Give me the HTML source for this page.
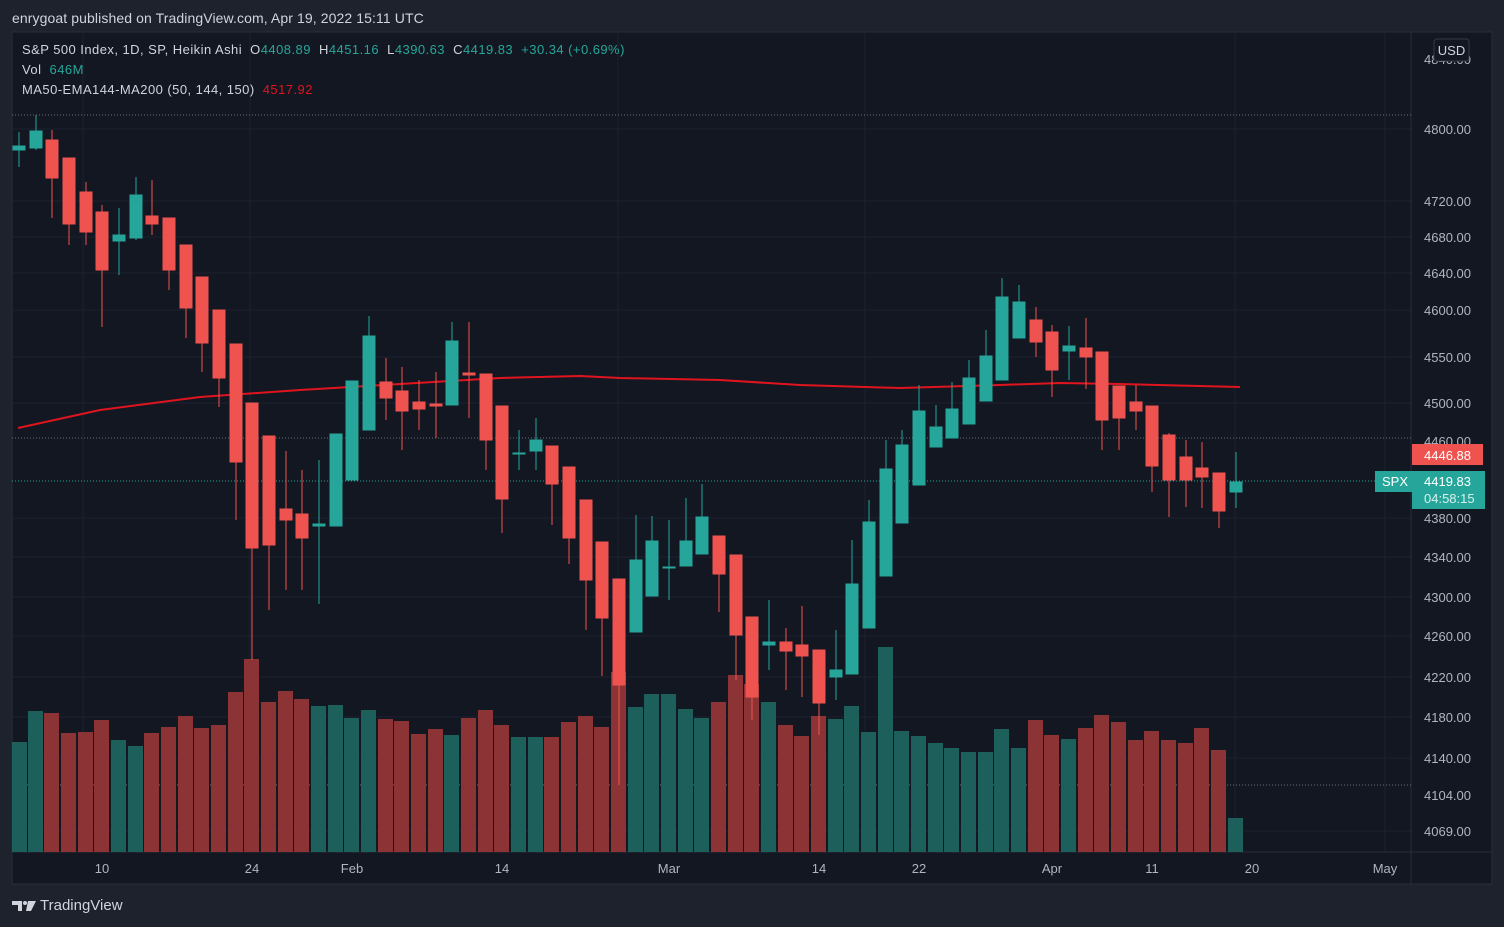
<!DOCTYPE html>
<html><head><meta charset="utf-8"><style>
html,body{margin:0;padding:0;width:1504px;height:927px;background:#1e222d;overflow:hidden;font-family:"Liberation Sans",sans-serif}
.t{position:absolute;white-space:nowrap}
.lg{letter-spacing:0.45px}
</style></head><body>
<div class="t" style="left:12px;top:10px;font-size:14px;color:#d1d4dc;letter-spacing:0.1px">enrygoat published on TradingView.com, Apr 19, 2022 15:11 UTC</div>
<svg width="1504" height="927" style="position:absolute;left:0;top:0">
<rect x="12" y="32" width="1480" height="852" fill="#131722" stroke="#2a2e39"/>
<g stroke="#1c2030" stroke-width="1">
<line x1="12" x2="1411" y1="129" y2="129"/><line x1="12" x2="1411" y1="201" y2="201"/><line x1="12" x2="1411" y1="237" y2="237"/><line x1="12" x2="1411" y1="273" y2="273"/><line x1="12" x2="1411" y1="310" y2="310"/><line x1="12" x2="1411" y1="357" y2="357"/><line x1="12" x2="1411" y1="403" y2="403"/><line x1="12" x2="1411" y1="518" y2="518"/><line x1="12" x2="1411" y1="557" y2="557"/><line x1="12" x2="1411" y1="597" y2="597"/><line x1="12" x2="1411" y1="636" y2="636"/><line x1="12" x2="1411" y1="677" y2="677"/><line x1="12" x2="1411" y1="717" y2="717"/><line x1="12" x2="1411" y1="758" y2="758"/><line x1="12" x2="1411" y1="831" y2="831"/>
<line x1="83" x2="83" y1="32" y2="852"/><line x1="250" x2="250" y1="32" y2="852"/><line x1="618" x2="618" y1="32" y2="852"/><line x1="865" x2="865" y1="32" y2="852"/><line x1="1235" x2="1235" y1="32" y2="852"/><line x1="1385" x2="1385" y1="32" y2="852"/>
</g>
<line x1="1411" x2="1411" y1="32" y2="884" stroke="#2a2e39"/>
<line x1="12" x2="1492" y1="852" y2="852" stroke="#2a2e39"/>
<g stroke="#6a6d78" stroke-dasharray="1 2"><line x1="12" x2="1411" y1="115" y2="115"/><line x1="12" x2="1411" y1="785" y2="785"/><line x1="12" x2="1411" y1="438" y2="438"/></g>
<line x1="12" x2="1375" y1="481" y2="481" stroke="#26a69a" stroke-dasharray="1 2"/>
<g fill="#1d5f5a">
<rect x="12" y="742" width="15" height="110"/><rect x="28" y="711" width="15" height="141"/><rect x="111" y="740" width="15" height="112"/><rect x="128" y="746" width="15" height="106"/><rect x="311" y="706" width="15" height="146"/><rect x="328" y="705" width="15" height="147"/><rect x="344" y="718" width="15" height="134"/><rect x="361" y="710" width="15" height="142"/><rect x="444" y="735" width="15" height="117"/><rect x="511" y="737" width="15" height="115"/><rect x="528" y="737" width="15" height="115"/><rect x="628" y="707" width="15" height="145"/><rect x="644" y="694" width="15" height="158"/><rect x="661" y="694" width="15" height="158"/><rect x="678" y="709" width="15" height="143"/><rect x="694" y="718" width="15" height="134"/><rect x="761" y="702" width="15" height="150"/><rect x="828" y="719" width="15" height="133"/><rect x="844" y="706" width="15" height="146"/><rect x="861" y="732" width="15" height="120"/><rect x="878" y="647" width="15" height="205"/><rect x="894" y="731" width="15" height="121"/><rect x="911" y="736" width="15" height="116"/><rect x="928" y="743" width="15" height="109"/><rect x="944" y="748" width="15" height="104"/><rect x="961" y="752" width="15" height="100"/><rect x="978" y="752" width="15" height="100"/><rect x="994" y="729" width="15" height="123"/><rect x="1011" y="748" width="15" height="104"/><rect x="1061" y="739" width="15" height="113"/><rect x="1228" y="818" width="15" height="34"/>
</g>
<g fill="#8c3336">
<rect x="44" y="713" width="15" height="139"/><rect x="61" y="733" width="15" height="119"/><rect x="78" y="732" width="15" height="120"/><rect x="94" y="720" width="15" height="132"/><rect x="144" y="733" width="15" height="119"/><rect x="161" y="727" width="15" height="125"/><rect x="178" y="716" width="15" height="136"/><rect x="194" y="728" width="15" height="124"/><rect x="211" y="725" width="15" height="127"/><rect x="228" y="692" width="15" height="160"/><rect x="244" y="659" width="15" height="193"/><rect x="261" y="702" width="15" height="150"/><rect x="278" y="691" width="15" height="161"/><rect x="294" y="699" width="15" height="153"/><rect x="378" y="719" width="15" height="133"/><rect x="394" y="721" width="15" height="131"/><rect x="411" y="734" width="15" height="118"/><rect x="428" y="729" width="15" height="123"/><rect x="461" y="718" width="15" height="134"/><rect x="478" y="710" width="15" height="142"/><rect x="494" y="725" width="15" height="127"/><rect x="544" y="737" width="15" height="115"/><rect x="561" y="722" width="15" height="130"/><rect x="578" y="716" width="15" height="136"/><rect x="594" y="727" width="15" height="125"/><rect x="611" y="672" width="15" height="180"/><rect x="711" y="702" width="15" height="150"/><rect x="728" y="675" width="15" height="177"/><rect x="744" y="684" width="15" height="168"/><rect x="778" y="725" width="15" height="127"/><rect x="794" y="736" width="15" height="116"/><rect x="811" y="716" width="15" height="136"/><rect x="1028" y="720" width="15" height="132"/><rect x="1044" y="735" width="15" height="117"/><rect x="1078" y="728" width="15" height="124"/><rect x="1094" y="715" width="15" height="137"/><rect x="1111" y="722" width="15" height="130"/><rect x="1128" y="740" width="15" height="112"/><rect x="1144" y="731" width="15" height="121"/><rect x="1161" y="740" width="15" height="112"/><rect x="1178" y="743" width="15" height="109"/><rect x="1194" y="728" width="15" height="124"/><rect x="1211" y="750" width="15" height="102"/>
</g>
<polyline fill="none" stroke="#e0141e" stroke-width="2" points="18,428 100,410 200,397 300,390 400,384 500,378 580,376 620,378 720,380 800,385 900,388 1000,385 1060,383 1120,384 1240,387"/>
<g stroke="#26a69a" fill="#26a69a">
<line x1="19" x2="19" y1="132" y2="167"/><rect x="13" y="146" width="12" height="4"/>
<line x1="36" x2="36" y1="115" y2="150"/><rect x="30" y="131" width="12" height="17"/>
<line x1="119" x2="119" y1="208" y2="275"/><rect x="113" y="235" width="12" height="6"/>
<line x1="136" x2="136" y1="177" y2="240"/><rect x="130" y="195" width="12" height="43"/>
<line x1="319" x2="319" y1="460" y2="604"/><rect x="313" y="524" width="12" height="2"/>
<line x1="336" x2="336" y1="434" y2="526"/><rect x="330" y="434" width="12" height="92"/>
<line x1="352" x2="352" y1="381" y2="480"/><rect x="346" y="381" width="12" height="99"/>
<line x1="369" x2="369" y1="316" y2="430"/><rect x="363" y="336" width="12" height="94"/>
<line x1="452" x2="452" y1="322" y2="405"/><rect x="446" y="341" width="12" height="64"/>
<line x1="519" x2="519" y1="430" y2="470"/><rect x="513" y="453" width="12" height="1"/>
<line x1="536" x2="536" y1="418" y2="470"/><rect x="530" y="440" width="12" height="11"/>
<line x1="636" x2="636" y1="515" y2="632"/><rect x="630" y="560" width="12" height="72"/>
<line x1="652" x2="652" y1="516" y2="596"/><rect x="646" y="541" width="12" height="55"/>
<line x1="669" x2="669" y1="520" y2="600"/><rect x="663" y="567" width="12" height="1"/>
<line x1="686" x2="686" y1="498" y2="566"/><rect x="680" y="541" width="12" height="25"/>
<line x1="702" x2="702" y1="484" y2="554"/><rect x="696" y="517" width="12" height="37"/>
<line x1="769" x2="769" y1="600" y2="670"/><rect x="763" y="642" width="12" height="3"/>
<line x1="836" x2="836" y1="630" y2="700"/><rect x="830" y="670" width="12" height="7"/>
<line x1="852" x2="852" y1="540" y2="674"/><rect x="846" y="584" width="12" height="90"/>
<line x1="869" x2="869" y1="500" y2="628"/><rect x="863" y="522" width="12" height="106"/>
<line x1="886" x2="886" y1="440" y2="576"/><rect x="880" y="469" width="12" height="107"/>
<line x1="902" x2="902" y1="430" y2="523"/><rect x="896" y="445" width="12" height="78"/>
<line x1="919" x2="919" y1="385" y2="485"/><rect x="913" y="411" width="12" height="74"/>
<line x1="936" x2="936" y1="405" y2="447"/><rect x="930" y="427" width="12" height="20"/>
<line x1="952" x2="952" y1="382" y2="438"/><rect x="946" y="409" width="12" height="29"/>
<line x1="969" x2="969" y1="360" y2="424"/><rect x="963" y="378" width="12" height="46"/>
<line x1="986" x2="986" y1="330" y2="401"/><rect x="980" y="356" width="12" height="45"/>
<line x1="1002" x2="1002" y1="278" y2="380"/><rect x="996" y="297" width="12" height="83"/>
<line x1="1019" x2="1019" y1="285" y2="338"/><rect x="1013" y="302" width="12" height="36"/>
<line x1="1069" x2="1069" y1="326" y2="380"/><rect x="1063" y="346" width="12" height="5"/>
<line x1="1236" x2="1236" y1="452" y2="508"/><rect x="1230" y="482" width="12" height="10"/>
</g>
<g stroke="#ef5350" fill="#ef5350">
<line x1="52" x2="52" y1="130" y2="218"/><rect x="46" y="140" width="12" height="38"/>
<line x1="69" x2="69" y1="158" y2="245"/><rect x="63" y="158" width="12" height="66"/>
<line x1="86" x2="86" y1="182" y2="245"/><rect x="80" y="192" width="12" height="40"/>
<line x1="102" x2="102" y1="205" y2="327"/><rect x="96" y="212" width="12" height="58"/>
<line x1="152" x2="152" y1="180" y2="235"/><rect x="146" y="216" width="12" height="8"/>
<line x1="169" x2="169" y1="218" y2="290"/><rect x="163" y="218" width="12" height="52"/>
<line x1="186" x2="186" y1="245" y2="338"/><rect x="180" y="245" width="12" height="63"/>
<line x1="202" x2="202" y1="277" y2="372"/><rect x="196" y="277" width="12" height="66"/>
<line x1="219" x2="219" y1="310" y2="407"/><rect x="213" y="310" width="12" height="68"/>
<line x1="236" x2="236" y1="344" y2="520"/><rect x="230" y="344" width="12" height="118"/>
<line x1="252" x2="252" y1="403" y2="660"/><rect x="246" y="403" width="12" height="145"/>
<line x1="269" x2="269" y1="436" y2="610"/><rect x="263" y="436" width="12" height="109"/>
<line x1="286" x2="286" y1="451" y2="590"/><rect x="280" y="509" width="12" height="11"/>
<line x1="302" x2="302" y1="470" y2="590"/><rect x="296" y="514" width="12" height="24"/>
<line x1="386" x2="386" y1="358" y2="420"/><rect x="380" y="382" width="12" height="16"/>
<line x1="402" x2="402" y1="367" y2="450"/><rect x="396" y="391" width="12" height="20"/>
<line x1="419" x2="419" y1="380" y2="430"/><rect x="413" y="402" width="12" height="7"/>
<line x1="436" x2="436" y1="372" y2="438"/><rect x="430" y="404" width="12" height="2"/>
<line x1="469" x2="469" y1="322" y2="418"/><rect x="463" y="373" width="12" height="2"/>
<line x1="486" x2="486" y1="374" y2="470"/><rect x="480" y="374" width="12" height="66"/>
<line x1="502" x2="502" y1="406" y2="533"/><rect x="496" y="406" width="12" height="93"/>
<line x1="552" x2="552" y1="446" y2="525"/><rect x="546" y="446" width="12" height="38"/>
<line x1="569" x2="569" y1="467" y2="564"/><rect x="563" y="467" width="12" height="71"/>
<line x1="586" x2="586" y1="500" y2="630"/><rect x="580" y="500" width="12" height="80"/>
<line x1="602" x2="602" y1="542" y2="676"/><rect x="596" y="542" width="12" height="76"/>
<line x1="619" x2="619" y1="579" y2="785"/><rect x="613" y="579" width="12" height="106"/>
<line x1="719" x2="719" y1="536" y2="612"/><rect x="713" y="536" width="12" height="38"/>
<line x1="736" x2="736" y1="555" y2="680"/><rect x="730" y="555" width="12" height="80"/>
<line x1="752" x2="752" y1="617" y2="720"/><rect x="746" y="617" width="12" height="80"/>
<line x1="786" x2="786" y1="628" y2="690"/><rect x="780" y="642" width="12" height="9"/>
<line x1="802" x2="802" y1="606" y2="697"/><rect x="796" y="645" width="12" height="11"/>
<line x1="819" x2="819" y1="650" y2="735"/><rect x="813" y="650" width="12" height="53"/>
<line x1="1036" x2="1036" y1="307" y2="357"/><rect x="1030" y="320" width="12" height="22"/>
<line x1="1052" x2="1052" y1="325" y2="397"/><rect x="1046" y="332" width="12" height="38"/>
<line x1="1086" x2="1086" y1="318" y2="389"/><rect x="1080" y="348" width="12" height="9"/>
<line x1="1102" x2="1102" y1="352" y2="450"/><rect x="1096" y="352" width="12" height="68"/>
<line x1="1119" x2="1119" y1="386" y2="450"/><rect x="1113" y="386" width="12" height="32"/>
<line x1="1136" x2="1136" y1="385" y2="430"/><rect x="1130" y="402" width="12" height="9"/>
<line x1="1152" x2="1152" y1="406" y2="492"/><rect x="1146" y="406" width="12" height="60"/>
<line x1="1169" x2="1169" y1="433" y2="517"/><rect x="1163" y="435" width="12" height="45"/>
<line x1="1186" x2="1186" y1="440" y2="507"/><rect x="1180" y="457" width="12" height="23"/>
<line x1="1202" x2="1202" y1="442" y2="508"/><rect x="1196" y="468" width="12" height="9"/>
<line x1="1219" x2="1219" y1="473" y2="528"/><rect x="1213" y="473" width="12" height="38"/>
</g>
<g font-size="13" fill="#b2b5be" font-family="Liberation Sans, sans-serif">
<text x="1424" y="64">4840.00</text><text x="1424" y="134">4800.00</text><text x="1424" y="206">4720.00</text><text x="1424" y="242">4680.00</text><text x="1424" y="278">4640.00</text><text x="1424" y="315">4600.00</text><text x="1424" y="362">4550.00</text><text x="1424" y="408">4500.00</text><text x="1424" y="446">4460.00</text><text x="1424" y="523">4380.00</text><text x="1424" y="562">4340.00</text><text x="1424" y="602">4300.00</text><text x="1424" y="641">4260.00</text><text x="1424" y="682">4220.00</text><text x="1424" y="722">4180.00</text><text x="1424" y="763">4140.00</text><text x="1424" y="800">4104.00</text><text x="1424" y="836">4069.00</text>
</g>
<rect x="1434" y="39" width="35" height="22" rx="3" fill="#131722" stroke="#363a45"/>
<text x="1451.5" y="55" font-size="13" fill="#d1d4dc" text-anchor="middle">USD</text>
<rect x="1412" y="444" width="71" height="21" fill="#ef5350"/>
<text x="1424" y="460" font-size="13" fill="#fff">4446.88</text>
<rect x="1375" y="471" width="37" height="21" fill="#26a69a"/>
<text x="1382" y="486" font-size="13" fill="#fff">SPX</text>
<rect x="1412" y="471" width="73" height="38" fill="#26a69a"/>
<text x="1424" y="486" font-size="13" fill="#fff">4419.83</text>
<text x="1424" y="503" font-size="13" fill="#d6f1ee">04:58:15</text>
<g font-size="13" fill="#b2b5be" text-anchor="middle">
<text x="102" y="873">10</text><text x="252" y="873">24</text><text x="352" y="873">Feb</text><text x="502" y="873">14</text><text x="669" y="873">Mar</text><text x="819" y="873">14</text><text x="919" y="873">22</text><text x="1052" y="873">Apr</text><text x="1152" y="873">11</text><text x="1252" y="873">20</text><text x="1385" y="873">May</text>
</g>
<g fill="#d1d4dc"><path d="M12 901h10v10h-4v-6h-6z"/><circle cx="25" cy="903" r="2"/><path d="M28 901h8l-5 10h-5z"/></g>
</svg>
<div class="t lg" style="left:22px;top:42px;font-size:13px;color:#d1d4dc">S&amp;P 500 Index, 1D, SP, Heikin Ashi&nbsp; O<span style="color:#26a69a">4408.89</span>&nbsp; H<span style="color:#26a69a">4451.16</span>&nbsp; L<span style="color:#26a69a">4390.63</span>&nbsp; C<span style="color:#26a69a">4419.83</span>&nbsp; <span style="color:#26a69a">+30.34 (+0.69%)</span></div>
<div class="t lg" style="left:22px;top:62px;font-size:13px;color:#d1d4dc">Vol&nbsp; <span style="color:#26a69a">646M</span></div>
<div class="t lg" style="left:22px;top:82px;font-size:13px;color:#d1d4dc">MA50-EMA144-MA200 (50, 144, 150)&nbsp; <span style="color:#e0141e">4517.92</span></div>
<div class="t" style="left:40px;top:897px;font-size:15px;color:#d1d4dc">TradingView</div>
</body></html>
